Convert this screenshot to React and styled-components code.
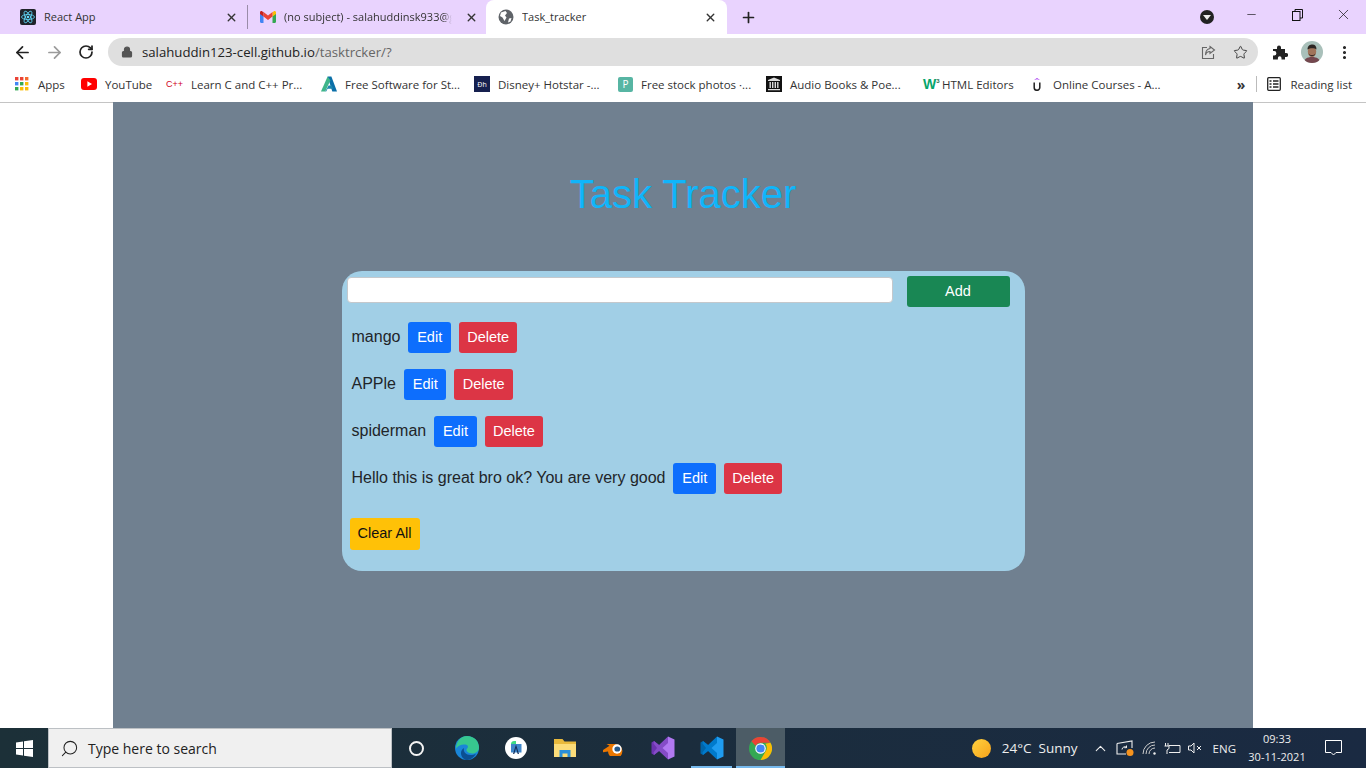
import styled, { createGlobalStyle } from "styled-components";
import { ArrowLeft, ArrowRight, RotateCw, Lock, Star, Plus, X, Minus, EllipsisVertical, ChevronUp, Search } from "lucide-react";

const tasks = ["mango", "APPle", "spiderman", "Hello this is great bro ok? You are very good"];

export default function App() {
  const bookmarks = [
    { label: "Apps", width: 66, gap: 7, icon: <AppsIcon /> },
    { label: "YouTube", width: 85, gap: 8, icon: <YoutubeIcon /> },
    { label: "Learn C and C++ Pr...", width: 155, gap: 9, icon: <CppMark>C++</CppMark> },
    { label: "Free Software for St...", width: 153, gap: 8, icon: <AutodeskIcon /> },
    { label: "Disney+ Hotstar -...", width: 144, gap: 8, icon: <DisneyMark>Ðh</DisneyMark> },
    { label: "Free stock photos ·...", width: 148, gap: 7, icon: <PexelsMark>P</PexelsMark> },
    { label: "Audio Books & Poe...", width: 157, gap: 8, icon: <ArchiveIcon /> },
    { label: "HTML Editors", width: 110, gap: 3, icon: <W3Mark>W<sup>3</sup></W3Mark> },
    { label: "Online Courses - A...", width: 150, gap: 4, icon: <UdemyIcon /> },
  ];

  return (
    <>
      <GlobalStyle />
      <Screen>
        <TabBar>
          <Tab $width={238}>
            <ReactFavicon />
            <TabTitle>React App</TabTitle>
            <X size={13} strokeWidth={2.6} color="#333" />
          </Tab>
          <TabDivider />
          <Tab $width={238}>
            <GmailIcon />
            <TabTitle $fade>(no subject) - salahuddinsk933@gmail.com</TabTitle>
            <X size={13} strokeWidth={2.6} color="#333" />
          </Tab>
          <Tab $active $width={241}>
            <GlobeIcon />
            <TabTitle>Task_tracker</TabTitle>
            <X size={13} strokeWidth={2.6} color="#333" />
          </Tab>
          <NewTab>
            <Plus size={17} strokeWidth={2.4} color="#222" />
          </NewTab>
          <WindowControls>
            <ProfileDot />
            <WindowButton><Minus size={13} strokeWidth={1.2} /></WindowButton>
            <WindowButton><RestoreIcon /></WindowButton>
            <WindowButton><X size={17} strokeWidth={1} /></WindowButton>
          </WindowControls>
        </TabBar>

        <Toolbar>
          <NavButton><ArrowLeft size={19} strokeWidth={2.2} color="#222" /></NavButton>
          <NavButton><ArrowRight size={19} strokeWidth={2.2} color="#9b9b9b" /></NavButton>
          <NavButton><RotateCw size={16} strokeWidth={2.6} color="#222" /></NavButton>
          <AddressBar>
            <Lock size={12} fill="#555" color="#555" strokeWidth={2.4} />
            <Url>
              salahuddin123-cell.github.io<UrlPath>/tasktrcker/?</UrlPath>
            </Url>
            <AddressActions>
              <ShareIcon />
              <Star size={15} strokeWidth={1.6} color="#444" />
            </AddressActions>
          </AddressBar>
          <ToolbarEnd>
            <PuzzleIcon />
            <AvatarIcon />
            <EllipsisVertical size={17} strokeWidth={2.4} color="#222" />
          </ToolbarEnd>
        </Toolbar>

        <BookmarkBar>
          {bookmarks.map((item) => (
            <Bookmark key={item.label} $width={item.width} $gap={item.gap}>
              <BookmarkIcon>{item.icon}</BookmarkIcon>
              <span>{item.label}</span>
            </Bookmark>
          ))}
          <BookmarkEnd>
            <Overflow>»</Overflow>
            <BarDivider />
            <ReadingIcon />
            <ReadingLabel>Reading list</ReadingLabel>
          </BookmarkEnd>
        </BookmarkBar>

        <Page>
          <Tracker>
            <Title>Task Tracker</Title>
            <Card>
              <AddRow>
                <TaskInput />
                <AddButton>Add</AddButton>
              </AddRow>
              {tasks.map((task) => (
                <TaskRow key={task}>
                  <TaskText>{task}</TaskText>
                  <Button $bg="#0d6efd" $width={42.5}>Edit</Button>
                  <Button $bg="#dc3545" $width={58.5}>Delete</Button>
                </TaskRow>
              ))}
              <ClearButton>Clear All</ClearButton>
            </Card>
          </Tracker>
        </Page>

        <Taskbar>
          <StartButton><WindowsIcon /></StartButton>
          <SearchBox>
            <SearchGlass><Search size={19} strokeWidth={1.3} color="#222" /></SearchGlass>
            <span>Type here to search</span>
          </SearchBox>
          <TaskApp $width={50}><Cortana /></TaskApp>
          <TaskApp><EdgeIcon /></TaskApp>
          <TaskApp><StudioIcon /></TaskApp>
          <TaskApp><FolderIcon /></TaskApp>
          <TaskApp><BlenderIcon /></TaskApp>
          <TaskApp><VsIcon loop="#6c33af" wing="#854cc7" panel="#b179f1" /></TaskApp>
          <TaskApp $open><VsIcon loop="#0065a9" wing="#007acc" panel="#1f9cf0" /></TaskApp>
          <TaskApp $open $active><ChromeIcon /></TaskApp>
          <Tray>
            <Sun />
            <Weather>24°C</Weather>
            <Weather>Sunny</Weather>
            <TrayIcons>
              <ChevronUp size={17} strokeWidth={1.5} color="#eee" />
              <ScreenIcon />
              <WifiIcon />
              <BatteryIcon />
              <MuteIcon />
            </TrayIcons>
            <Lang>ENG</Lang>
            <Clock>
              <span>09:33</span>
              <span>30-11-2021</span>
            </Clock>
            <ChatIcon />
          </Tray>
        </Taskbar>
      </Screen>
    </>
  );
}

function AppsIcon() {
  const colors = ["#ea4335", "#ea4335", "#f4692e", "#4285f4", "#34a853", "#fbbc04", "#34a853", "#fbbc04", "#fbbc04"];
  return (
    <svg width="14" height="14" viewBox="0 0 14 14">
      {colors.map((c, i) => (
        <rect key={i} x={(i % 3) * 5} y={Math.floor(i / 3) * 5} width="3.4" height="3.4" fill={c} />
      ))}
    </svg>
  );
}

function YoutubeIcon() {
  return (
    <svg width="16" height="12" viewBox="0 0 16 12">
      <rect width="16" height="12" rx="3" fill="#f00" />
      <path d="M6.4 3.2 11 6l-4.6 2.8z" fill="#fff" />
    </svg>
  );
}

function AutodeskIcon() {
  return (
    <svg width="17" height="16" viewBox="0 0 17 16">
      <path d="M7 0h4l6 16h-5z" fill="#0a6fa8" />
      <path d="M7 0 0 16h4.500L10 4z" fill="#3fb58a" />
      <path d="M4.500 16 8 9.500h3.500l1.500 3.500H7L5.500 16z" fill="#1d86ad" />
    </svg>
  );
}

function ArchiveIcon() {
  return (
    <svg width="16" height="16" viewBox="0 0 16 16">
      <rect width="16" height="16" fill="#111" />
      <path d="M8 1.500 14 4v1H2V4zM2 13h12v1.300H2z" fill="#ddd" />
      <path d="M3.500 6h1.400v6H3.500zM6 6h1.400v6H6zM8.600 6H10v6H8.600zM11.100 6h1.400v6h-1.400z" fill="#ddd" />
    </svg>
  );
}

function UdemyIcon() {
  return (
    <svg width="8" height="13" viewBox="0 0 8 13">
      <path d="M4 0 7 2 4 1.300 1 2z" fill="#a435f0" />
      <path d="M1.200 4.500v5a2.800 2.800 0 0 0 5.600 0v-5" fill="none" stroke="#222" strokeWidth="1.500" />
    </svg>
  );
}

function ReactFavicon() {
  return (
    <svg width="16" height="16" viewBox="0 0 16 16">
      <rect width="16" height="16" rx="2" fill="#20232a" />
      <g fill="none" stroke="#61dafb" strokeWidth="0.8">
        <ellipse cx="8" cy="8" rx="6.5" ry="2.5" />
        <ellipse cx="8" cy="8" rx="6.5" ry="2.5" transform="rotate(60 8 8)" />
        <ellipse cx="8" cy="8" rx="6.5" ry="2.5" transform="rotate(120 8 8)" />
      </g>
      <circle cx="8" cy="8" r="1.3" fill="#61dafb" />
    </svg>
  );
}

function GmailIcon() {
  return (
    <svg width="16" height="12" viewBox="0 0 16 12">
      <path d="M0 2v8.800C0 11.500.5 12 1.200 12H3.500V5z" fill="#4285f4" />
      <path d="M16 2v8.800c0 .7-.5 1.200-1.200 1.200h-2.300V5z" fill="#34a853" />
      <path d="M12.500 1v4.500L16 3V1.500C16 .3 14.700-.4 13.700.4z" fill="#fbbc04" />
      <path d="M3.500 5.500V1L8 4.400 12.500 1v4.500L8 8.900z" fill="#ea4335" />
      <path d="M0 1.500V3l3.500 2.500V1L2.300.4C1.300-.4 0 .3 0 1.500z" fill="#c5221f" />
    </svg>
  );
}

function GlobeIcon() {
  return (
    <svg width="16" height="16" viewBox="0 0 16 16">
      <circle cx="8" cy="8" r="7.5" fill="#5f6368" />
      <path d="M3 3.500 7.500 2 9 4 7 6.500 8.500 8.500 6.500 12 4.500 8.500 2 7zM11 9.500 13.500 9 12.500 12.500 10 13.500z" fill="#fff" />
    </svg>
  );
}

function RestoreIcon() {
  return (
    <svg width="11" height="12" viewBox="0 0 11 12" fill="none" stroke="#111" strokeWidth="1">
      <rect x="0.5" y="2.5" width="7.5" height="9" />
      <path d="M3 2.500V.5h7.500v8.500H8" />
    </svg>
  );
}

function ShareIcon() {
  return (
    <svg width="15" height="15" viewBox="0 0 15 15" fill="none" stroke="#666" strokeWidth="1.1">
      <path d="M6 2.500H1.500v11h11V9" />
      <path d="M9 1.500 13.500 5 9 8.500V6.500C6.500 6.500 5 8 4.500 10 4.500 6.500 6 4 9 3.500z" />
    </svg>
  );
}

function PuzzleIcon() {
  return (
    <svg width="16" height="16" viewBox="0 0 16 16">
      <path d="M1 5h4V3.500a2 2 0 0 1 4 0V5h4v4h1.200a2 2 0 0 1 0 4H13v2.500H9.500V14a1.800 1.800 0 0 0-3.600 0v1.500H1v-4h1.200a2.200 2.200 0 0 0 0-4.400H1z" fill="#222" />
    </svg>
  );
}

function AvatarIcon() {
  return (
    <svg width="22" height="22" viewBox="0 0 22 22">
      <defs>
        <clipPath id="avatarClip">
          <circle cx="11" cy="11" r="11" />
        </clipPath>
      </defs>
      <g clipPath="url(#avatarClip)">
        <rect width="22" height="22" fill="#a9c0ba" />
        <path d="M3 22c0-4 3-6 8-6s8 2 8 6z" fill="#74474e" />
        <ellipse cx="11" cy="10.500" rx="4.200" ry="5.500" fill="#a0745a" />
        <path d="M6.500 8.500C6.500 4.500 9 3.500 11.500 3.500s4 1.500 4 5c-1.500-1.500-6-2-9 0z" fill="#2c2522" />
        <path d="M7.500 12.500c1 3.500 6 3.500 7 0-1 1-2 1.500-3.500 1.500s-2.500-.5-3.500-1.500z" fill="#3a2c28" />
      </g>
    </svg>
  );
}

function ReadingIcon() {
  return (
    <svg width="14" height="14" viewBox="0 0 14 14" fill="none" stroke="#222" strokeWidth="1.3">
      <rect x="0.7" y="0.7" width="12.6" height="12.6" rx="1" />
      <path d="M2.500 4h2M6 4h5.500M2.500 7h2M6 7h5.500M2.500 10h2M6 10h5.500" />
    </svg>
  );
}

function WindowsIcon() {
  return (
    <svg width="17" height="17" viewBox="0 0 17 17">
      <path d="M0 2.400 7 1.400V8H0zM8 1.200 17 0v8H8zM0 9h7v6.600l-7-1zM8 9h9v8l-9-1.200z" fill="#fff" />
    </svg>
  );
}

function EdgeIcon() {
  return (
    <svg width="24" height="24" viewBox="0 0 24 24">
      <circle cx="12" cy="12" r="12" fill="#1a86d8" />
      <path d="M12 0c7 0 12 5 12 11.500 0 3.500-3 6-6.500 6-2.500 0-4.500-.8-5.500-2-1-1.500-.5-2.500.5-3.500 1-1 .5-3-2-3.500C7 8 3.500 9 1 12.500 1 6 5.500 0 12 0z" fill="#37c78f" />
      <path d="M9 12c-1 4 2 7 6.500 7 2 0 4-.5 5.500-1.500C19 21.500 15.500 24 11.500 24 8 23.500 6 20 6 17c0-2 1-4 3-5z" fill="#0b4f92" />
    </svg>
  );
}

function StudioIcon() {
  return (
    <svg width="22" height="22" viewBox="0 0 22 22">
      <circle cx="11" cy="11" r="11" fill="#fff" />
      <path d="M6 7c0-2 1.500-3 3-3h2v3z" fill="#3ddc84" />
      <path d="M6 7h10.500v8.500H6z" fill="#3f86c9" />
      <path d="M11 7.500 14 17h-1.300l-1.700-6-1.700 6H8z" fill="#14305c" />
    </svg>
  );
}

function FolderIcon() {
  return (
    <svg width="22" height="18" viewBox="0 0 22 18">
      <path d="M0 0h8.500l2 2.500H22V18H0z" fill="#e8b93c" />
      <rect y="5" width="22" height="13" fill="#fbdc79" />
      <path d="M5.500 11h11v7h-3v-3.500h-5V18h-3z" fill="#2b8fd8" />
    </svg>
  );
}

function BlenderIcon() {
  return (
    <svg width="22" height="15" viewBox="0 0 22 15">
      <path d="M0 9 6.500 4.700 3.500 3h8a7.200 7.200 0 1 1-6.500 7.500L1.500 11A1 1 0 0 1 0 9z" fill="#ea7600" />
      <circle cx="14" cy="8" r="4.700" fill="#fff" />
      <ellipse cx="14.300" cy="8" rx="2.900" ry="2.600" fill="#265787" />
    </svg>
  );
}

function VsIcon({ loop, wing, panel }) {
  return (
    <svg width="24" height="24" viewBox="0 0 24 24">
      <path d="M3 5 .5 6.500v11L3 19l5-4 4-3-4-3z" fill={loop} />
      <path d="M17 .5 8 9l-5-4-.5 2.500L6 12l-3.500 4.500L3 19l5-4 9 8.500 2-10V6z" fill={wing} />
      <path d="M17 .5 23.500 3.500v17L17 23.500V17l-5.500-5L17 7z" fill={panel} />
    </svg>
  );
}

function ChromeIcon() {
  return (
    <svg width="23" height="23" viewBox="0 0 24 24">
      <circle cx="12" cy="12" r="12" fill="#34a853" />
      <path d="M12 0a12 12 0 0 1 10.400 6H12a6 6 0 0 0-5.200 3L2.500 4.500A12 12 0 0 1 12 0z" fill="#ea4335" />
      <path d="M22.400 6A12 12 0 0 1 12 24l5.200-9A6 6 0 0 0 17 7z" fill="#fbbc04" />
      <circle cx="12" cy="12" r="5.5" fill="#fff" />
      <circle cx="12" cy="12" r="4.3" fill="#4285f4" />
    </svg>
  );
}

function ScreenIcon() {
  return (
    <svg width="19" height="17" viewBox="0 0 19 17" fill="none">
      <path d="M1 3.500 16 1v7M1 3.500V14h9" stroke="#eee" strokeWidth="1.1" />
      <path d="M6 9.500a3 3 0 0 1 5-2M10.500 5.500v2.200H8.300" stroke="#eee" strokeWidth="1" />
      <circle cx="14" cy="12.5" r="3.5" fill="#f7931e" />
    </svg>
  );
}

function WifiIcon() {
  return (
    <svg width="15" height="14" viewBox="0 0 15 14" fill="none" stroke="#ccc" strokeWidth="1">
      <path d="M1 13A12 12 0 0 1 13 1M4 13a9 9 0 0 1 9-9M7 13a6 6 0 0 1 6-6" />
      <circle cx="12.5" cy="12.5" r="1.2" fill="#eee" stroke="none" />
    </svg>
  );
}

function BatteryIcon() {
  return (
    <svg width="17" height="13" viewBox="0 0 17 13" fill="none" stroke="#eee" strokeWidth="1">
      <path d="M5 3.500h11v7H5M4 1v3M1.500 1v3M.5 4h4.500v2.500L3 8v4" />
    </svg>
  );
}

function MuteIcon() {
  return (
    <svg width="15" height="12" viewBox="0 0 15 12" fill="none" stroke="#eee" strokeWidth="1">
      <path d="M.5 4v4h2.500l3 3V1L3 4zM9 4l4 4M13 4l-4 4" />
    </svg>
  );
}

function ChatIcon() {
  return (
    <Chat>
      <svg width="17" height="16" viewBox="0 0 17 16" fill="none" stroke="#fff" strokeWidth="1">
        <path d="M.5.500h16v12h-5.500L8.500 15 6 12.500H.5z" />
      </svg>
    </Chat>
  );
}

const GlobalStyle = createGlobalStyle`
  html, body {
    margin: 0;
    padding: 0;
    background: #fff;
  }
  * {
    box-sizing: border-box;
  }
`;

const Screen = styled.div`
  display: flex;
  flex-direction: column;
  width: 1366px;
  height: 768px;
  overflow: hidden;
  font-family: "Open Sans", "Liberation Sans", sans-serif;
`;

const TabBar = styled.div`
  display: flex;
  align-items: stretch;
  height: 34px;
  padding-left: 8px;
  background: #e9d3fe;
  flex-shrink: 0;
`;

const Tab = styled.div`
  display: flex;
  align-items: center;
  gap: 8px;
  width: ${({ $width }) => $width}px;
  padding: 0 ${({ $active }) => ($active ? 10 : 8)}px 0 12px;
  color: #333;
  border-radius: 8px 8px 0 0;
  background: ${({ $active }) => ($active ? "#fff" : "transparent")};
`;

const TabTitle = styled.span`
  flex: 1;
  overflow: hidden;
  padding-bottom: 2px;
  font-size: 11px;
  white-space: nowrap;
  ${({ $fade }) => $fade && "mask-image: linear-gradient(to right, #000 92%, transparent 97%);"}
`;

const TabDivider = styled.div`
  width: 1px;
  height: 24px;
  margin: 5px 0 0 1px;
  background: #9a8ca8;
`;

const NewTab = styled.div`
  display: flex;
  align-items: center;
  justify-content: center;
  width: 42px;
`;

const WindowControls = styled.div`
  display: flex;
  align-items: center;
  margin-left: auto;
`;

const ProfileDot = styled.div`
  position: relative;
  width: 14px;
  height: 14px;
  margin-right: 14px;
  border-radius: 50%;
  background: #222;
  &::after {
    content: "";
    position: absolute;
    left: 3px;
    top: 5px;
    border-left: 4px solid transparent;
    border-right: 4px solid transparent;
    border-top: 5px solid #eee;
  }
`;

const WindowButton = styled.div`
  display: flex;
  align-items: center;
  justify-content: center;
  align-self: flex-start;
  width: 46px;
  height: 29px;
  color: #111;
`;

const Toolbar = styled.div`
  display: flex;
  align-items: center;
  height: 36px;
  padding-left: 6px;
  background: #fff;
  flex-shrink: 0;
`;

const NavButton = styled.div`
  display: flex;
  align-items: center;
  justify-content: center;
  width: 32px;
`;

const AddressBar = styled.div`
  display: flex;
  align-items: center;
  gap: 9px;
  width: 1150px;
  height: 28px;
  margin-left: 6px;
  padding: 0 10px 0 13px;
  border-radius: 14px;
  background: #dfdfdf;
`;

const Url = styled.div`
  font-size: 13.2px;
  color: #222;
`;

const UrlPath = styled.span`
  color: #666;
`;

const AddressActions = styled.div`
  display: flex;
  align-items: center;
  gap: 17px;
  margin-left: auto;
`;

const ToolbarEnd = styled.div`
  display: flex;
  align-items: center;
  gap: 13px;
  margin-left: 14px;
`;

const BookmarkBar = styled.div`
  display: flex;
  align-items: center;
  height: 33px;
  padding: 0 0 4px 15px;
  font-size: 11.5px;
  color: #333;
  background: #fff;
  border-bottom: 1px solid #c4c4c4;
  flex-shrink: 0;
`;

const Bookmark = styled.div`
  display: flex;
  align-items: center;
  gap: ${({ $gap }) => $gap}px;
  width: ${({ $width }) => $width}px;
  white-space: nowrap;
`;

const BookmarkIcon = styled.div`
  display: flex;
  align-items: center;
  justify-content: flex-start;
  width: 16px;
  height: 16px;
`;

const CppMark = styled.span`
  font-family: "Liberation Sans", sans-serif;
  font-size: 9px;
  color: #d0021b;
  white-space: nowrap;
`;

const DisneyMark = styled.span`
  display: flex;
  align-items: center;
  justify-content: center;
  flex-shrink: 0;
  width: 16px;
  height: 16px;
  font-size: 7px;
  color: #fff;
  background: #16204f;
`;

const PexelsMark = styled.span`
  display: flex;
  align-items: center;
  justify-content: center;
  flex-shrink: 0;
  width: 15px;
  height: 15px;
  font-size: 10px;
  color: #fff;
  border-radius: 2px;
  background: #57b5a3;
`;

const W3Mark = styled.span`
  font-family: "Liberation Sans", sans-serif;
  font-size: 14px;
  font-weight: 700;
  line-height: 14px;
  color: #04a56b;
  white-space: nowrap;
  sup {
    font-size: 6px;
    line-height: 0;
    color: #1a6b4c;
  }
`;

const BookmarkEnd = styled.div`
  display: flex;
  align-items: center;
  margin-left: auto;
  padding-right: 14px;
  white-space: nowrap;
`;

const ReadingLabel = styled.span`
  margin-left: 9px;
`;

const Overflow = styled.span`
  margin-right: 11px;
  font-size: 14px;
  font-weight: 700;
`;

const BarDivider = styled.div`
  width: 1px;
  height: 16px;
  margin-right: 10px;
  background: #bbb;
`;

const Page = styled.main`
  flex: 1;
  display: flex;
  justify-content: center;
  min-height: 0;
  font-family: "Liberation Sans", Arial, sans-serif;
  background: #fff;
`;

const Tracker = styled.div`
  display: flex;
  flex-direction: column;
  align-items: center;
  width: 1140px;
  margin-top: -1px;
  background: #708090;
`;

const Title = styled.h1`
  margin: 69px 0 53px;
  font-size: 40px;
  font-weight: 400;
  line-height: 47px;
  color: #10b5fa;
`;

const Card = styled.section`
  width: 683px;
  height: 300px;
  padding: 5px 15px 0 5px;
  border-radius: 20px;
  background: #a1cfe6;
`;

const AddRow = styled.div`
  display: flex;
  justify-content: space-between;
  align-items: flex-start;
  margin-bottom: 15px;
`;

const TaskInput = styled.input`
  width: 546px;
  height: 26px;
  margin-top: 1px;
  border: 1px solid #c4c8cc;
  border-radius: 4px;
  background: #fff;
`;

const BaseButton = styled.button`
  height: 31px;
  padding: 0 0 2px;
  font-family: inherit;
  font-size: 14.5px;
  color: #fff;
  border: none;
  border-radius: 3px;
`;

const AddButton = styled(BaseButton)`
  width: 103px;
  background: #198754;
`;

const TaskRow = styled.div`
  display: flex;
  align-items: center;
  gap: 8px;
  height: 31px;
  margin-bottom: 16px;
  padding-left: 5px;
`;

const TaskText = styled.span`
  padding-bottom: 2px;
  font-size: 16px;
  color: #212529;
`;

const Button = styled(BaseButton)`
  width: ${({ $width }) => $width}px;
  background: ${({ $bg }) => $bg};
`;

const ClearButton = styled(BaseButton)`
  width: 70px;
  height: 32px;
  margin: 8px 0 0 3px;
  color: #111;
  background: #ffc107;
`;

const Taskbar = styled.footer`
  display: flex;
  align-items: stretch;
  height: 40px;
  background: linear-gradient(to right, #1c3038, #1a2a42);
  flex-shrink: 0;
`;

const StartButton = styled.div`
  display: flex;
  align-items: center;
  justify-content: center;
  width: 48px;
`;

const SearchBox = styled.div`
  display: flex;
  align-items: center;
  gap: 9px;
  width: 344px;
  padding-left: 11px;
  font-size: 14px;
  color: #222;
  background: #f0f0f0;
  border: 1px solid #bcc0c4;
`;

const SearchGlass = styled.span`
  display: flex;
  transform: scaleX(-1);
`;

const TaskApp = styled.div`
  position: relative;
  display: flex;
  align-items: center;
  justify-content: center;
  width: ${({ $width }) => $width || 49}px;
  background: ${({ $active }) => ($active ? "#4c5c66" : "transparent")};
  &::after {
    content: "";
    display: ${({ $open }) => ($open ? "block" : "none")};
    position: absolute;
    left: ${({ $active }) => ($active ? 0 : 4)}px;
    right: ${({ $active }) => ($active ? 0 : 4)}px;
    bottom: 0;
    height: 2px;
    background: #76b9ed;
  }
`;

const Cortana = styled.div`
  width: 15px;
  height: 15px;
  margin-right: 2px;
  border: 2.5px solid #f4f4f4;
  border-radius: 50%;
`;

const Tray = styled.div`
  display: flex;
  align-items: center;
  margin-left: auto;
  color: #eee;
`;

const Sun = styled.div`
  width: 19px;
  height: 19px;
  margin-right: 4px;
  border-radius: 50%;
  background: linear-gradient(135deg, #ffd23f, #f7a21b);
`;

const Weather = styled.span`
  margin-left: 7px;
  font-size: 13.5px;
`;

const TrayIcons = styled.div`
  display: flex;
  align-items: center;
  gap: 7px;
  margin-left: 14px;
`;

const Lang = styled.span`
  margin-left: 10px;
  font-size: 11.5px;
`;

const Clock = styled.div`
  display: flex;
  flex-direction: column;
  align-items: center;
  gap: 3px;
  width: 58px;
  margin-left: 12px;
  padding-bottom: 2px;
  font-size: 11px;
  line-height: 15px;
`;

const Chat = styled.div`
  display: flex;
  justify-content: center;
  width: 60px;
  padding-right: 6px;
`;
